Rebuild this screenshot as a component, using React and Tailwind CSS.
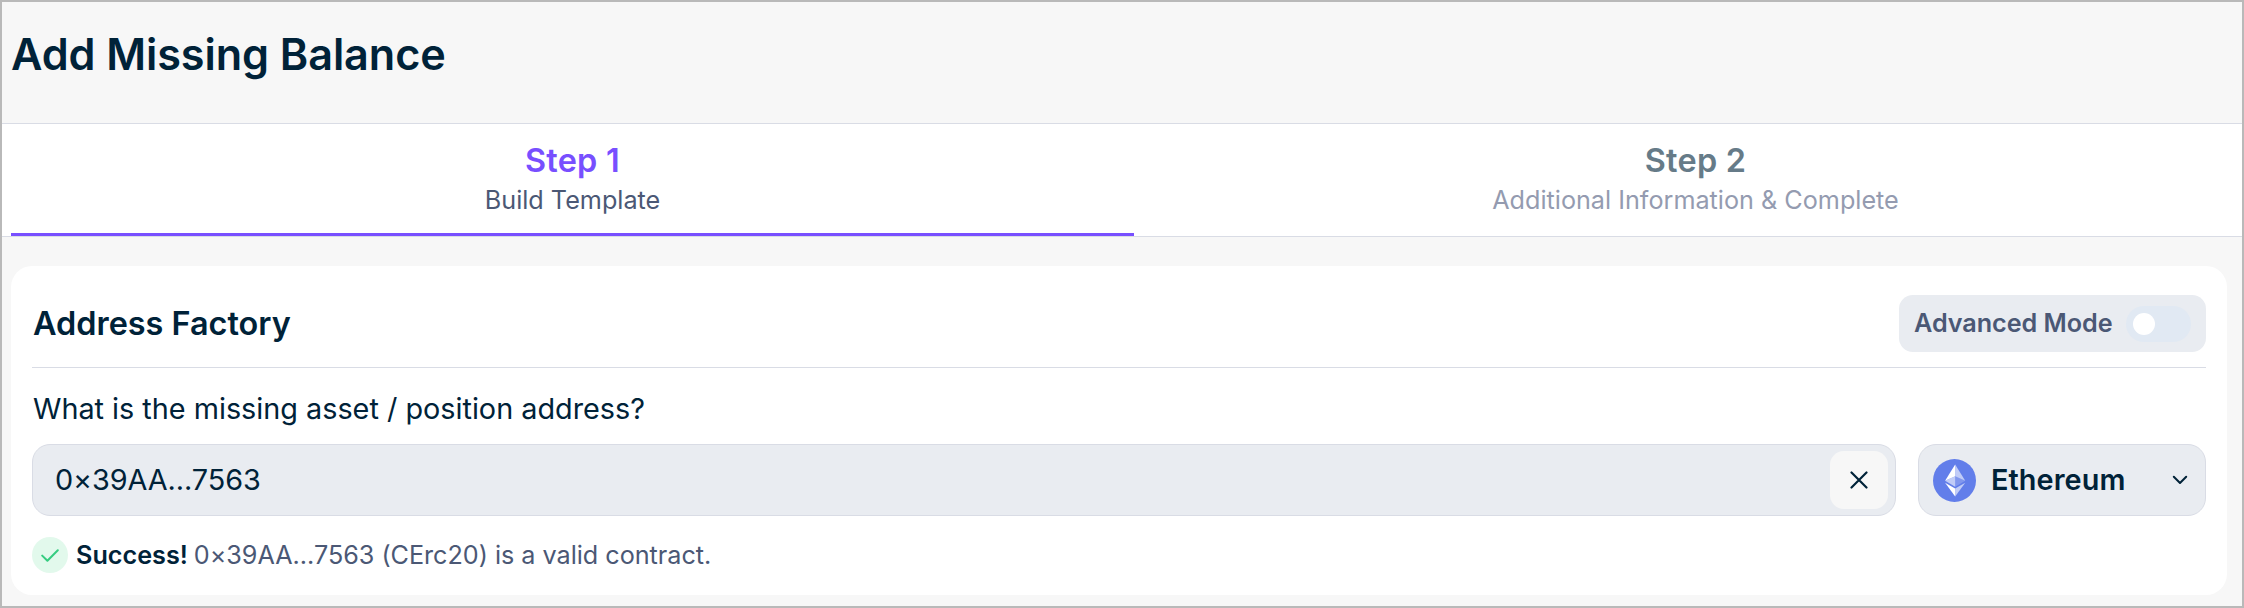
function EthereumIcon() {
  return (
    <svg viewBox="0 0 32 32" className="size-[43px] shrink-0">
      <circle cx="16" cy="16" r="16" fill="#627eea" />
      <g fill="#fff">
        <path fillOpacity=".602" d="M16.498 4v8.87l7.497 3.35z" />
        <path d="M16.498 4L9 16.22l7.498-3.35z" />
        <path fillOpacity=".602" d="M16.498 21.968v6.027L24 17.616z" />
        <path d="M16.498 27.995v-6.028L9 17.616z" />
        <path fillOpacity=".2" d="M16.498 20.573l7.497-4.353-7.497-3.348z" />
        <path fillOpacity=".602" d="M9 16.22l7.498 4.353v-7.701z" />
      </g>
    </svg>
  );
}

function Tab({ title, subtitle, active }) {
  return (
    <div
      className={
        "flex h-[112px] w-[1123px] shrink-0 flex-col items-center border-b-[3px] pt-[17px] " +
        (active ? "border-[#784fff]" : "border-transparent")
      }
    >
      <div
        className={
          "text-[32.4px] leading-[40px] font-semibold tracking-[0.25px] " +
          (active ? "text-[#784fff]" : "text-[#667b88]")
        }
      >
        {title}
      </div>
      <div className={"-mt-px text-[25.2px] leading-[40px] " + (active ? "text-[#4b5875]" : "text-[#949bb0]")}>
        {subtitle}
      </div>
    </div>
  );
}

export default function App() {
  return (
    <div className="h-[608px] w-[2244px] overflow-hidden border-2 border-[#b9b9b9] bg-[#f7f7f7] font-[Inter,sans-serif] text-[#002238]">
      <header className="h-[121px] pt-[22px] pl-[9px]">
        <h1 className="text-[43.2px] leading-[60px] font-semibold tracking-[-0.08px]">Add Missing Balance</h1>
      </header>

      <nav className="flex overflow-hidden border-y border-[#d9dce5] bg-white pl-[9px]">
        <Tab title="Step 1" subtitle="Build Template" active />
        <Tab title="Step 2" subtitle="Additional Information & Complete" />
      </nav>

      <main className="mt-[29px] mr-[15px] ml-[9px] h-[329px] rounded-[21px] bg-white px-[21px] pt-[29px]">
        <div className="flex items-center justify-between border-b border-[#d9dce5] pb-[15px]">
          <h2 className="pt-0.5 pl-px text-[32.4px] font-semibold">Address Factory</h2>
          <div className="flex h-[57px] w-[307px] items-center justify-between rounded-[14px] bg-[#e9ecf1] pr-[15px] pl-[15px]">
            <span className="text-[25.2px] font-semibold tracking-[-0.05px] text-[#4b5875]">Advanced Mode</span>
            <span className="flex h-9 w-[65px] items-center rounded-full bg-[#e1e9f3] pl-[7px]">
              <span className="size-[22px] rounded-full bg-white" />
            </span>
          </div>
        </div>

        <label className="mt-[21px] block pl-px text-[28.8px] leading-[40px]">
          What is the missing asset / position address?
        </label>

        <div className="mt-[15px] flex gap-[22px]">
          <div className="flex h-[72px] flex-1 items-center justify-between rounded-[18px] border border-[#d9dce5] bg-[#e9ecf1] pr-[7px] pl-[22px]">
            <span className="text-[28.8px] tracking-[-0.08px]">0×39AA...7563</span>
            <button className="flex size-[58px] items-center justify-center rounded-[14px] bg-[#f7f7f7]">
              <svg viewBox="0 0 18 18" className="size-[18px]" fill="none" stroke="#002238" strokeWidth="2.2" strokeLinecap="round">
                <path d="M1.5 1.5L16.5 16.5M16.5 1.5L1.5 16.5" />
              </svg>
            </button>
          </div>
          <div className="flex h-[72px] w-[288px] items-center rounded-[18px] border border-[#d9dce5] bg-[#e9ecf1] pr-[17px] pl-[14px]">
            <EthereumIcon />
            <span className="ml-[15px] text-[28.8px] font-semibold tracking-[0.1px]">Ethereum</span>
            <svg viewBox="0 0 16 10" className="ml-auto h-2.5 w-4" fill="none" stroke="#002238" strokeWidth="2" strokeLinecap="round" strokeLinejoin="round">
              <path d="M1.8 1.8L8 8L14.2 1.8" />
            </svg>
          </div>
        </div>

        <div className="mt-[21px] flex h-9 items-center text-[25.2px]">
          <span className="mr-2 flex size-9 items-center justify-center rounded-full bg-[#e2f9ec]">
            <svg viewBox="0 0 18 13" className="h-[13px] w-[18px]" fill="none" stroke="#35cc80" strokeWidth="2" strokeLinecap="round" strokeLinejoin="round">
              <path d="M1.2 6.6L6.4 11.8L16.8 1.2" />
            </svg>
          </span>
          <span className="pt-0.5 font-semibold">Success!</span>
          <span className="ml-[6px] pt-0.5 tracking-[-0.02px] text-[#4b5875]">
            0×39AA...7563 (CErc20) is a valid contract.
          </span>
        </div>
      </main>
    </div>
  );
}
